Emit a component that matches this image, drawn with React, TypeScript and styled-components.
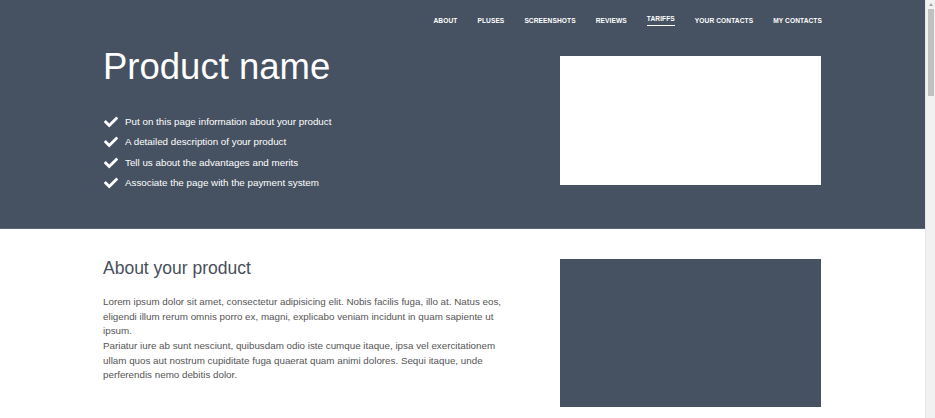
import styled, { createGlobalStyle } from "styled-components";
import { FaCheck } from "react-icons/fa";

const GlobalStyle = createGlobalStyle`
  html, body {
    margin: 0;
    padding: 0;
    background: #ffffff;
  }
  body {
    font-family: "Liberation Sans", Arial, sans-serif;
    padding-right: 10px;
  }
  * {
    box-sizing: border-box;
  }
`;

const NAV_ITEMS = [
  "About",
  "Pluses",
  "Screenshots",
  "Reviews",
  "Tariffs",
  "Your contacts",
  "My contacts",
];

const FEATURES = [
  "Put on this page information about your product",
  "A detailed description of your product",
  "Tell us about the advantages and merits",
  "Associate the page with the payment system",
];

// the page scrollbar as it shows in the shot
const ScrollTrack = styled.div`
  position: fixed;
  top: 0;
  right: 0;
  width: 10px;
  height: 100vh;
  background: #f1f1f1;
  border-left: 1px solid #e6e6e6;
  z-index: 10;
`;

const ScrollArrow = styled.div`
  width: 0;
  height: 0;
  margin: 3px auto 0;
  border-left: 2.5px solid transparent;
  border-right: 2.5px solid transparent;
  border-bottom: 3px solid #a3a3a3;
`;

const ScrollThumb = styled.div`
  margin: 3px 1px 0 2px;
  height: 87px;
  background: #c1c1c1;
`;

const Header = styled.header`
  background: #465261;
  border-bottom: 1px solid #5c6774;
  padding: 10px 0 35px;
`;

const Container = styled.div`
  width: 719px;
  margin: 0 auto;
`;

const Nav = styled.nav`
  display: flex;
  justify-content: flex-end;
  gap: 20px;
  height: 20px;
  align-items: center;
`;

const NavLink = styled.a<{ $active?: boolean }>`
  color: #ffffff;
  font-size: 6.6px;
  font-weight: 700;
  text-transform: uppercase;
  text-decoration: none;
  letter-spacing: 0.1px;
  padding-bottom: ${(p) => (p.$active ? "3px" : "0")};
  border-bottom: ${(p) => (p.$active ? "1.5px solid #ffffff" : "none")};
  cursor: pointer;
`;

const Row = styled.div`
  display: grid;
  grid-template-columns: 1fr 262px;
  column-gap: 40px;
`;

const Hero = styled(Row)`
  margin-top: 16px;
`;

const Title = styled.h1`
  margin: 0;
  color: #ffffff;
  font-size: 36.5px;
  font-weight: 400;
  line-height: 42px;
`;

const FeatureList = styled.ul`
  list-style: none;
  margin: 24px 0 0;
  padding: 0;
`;

const Feature = styled.li`
  display: flex;
  align-items: center;
  gap: 7px;
  color: #ffffff;
  font-size: 9.8px;
  line-height: 20.3px;
  svg {
    width: 14px;
    height: 14px;
    margin-left: 1px;
  }
`;

const Picture = styled.div<{ $tone: "light" | "dark"; $height: number }>`
  height: ${(p) => p.$height}px;
  background: ${(p) => (p.$tone === "light" ? "#ffffff" : "#465261")};
  margin-top: ${(p) => (p.$tone === "light" ? "10px" : "0")};
  margin-right: 1px;
`;

const Section = styled.section`
  padding: 30px 0 40px;
`;

const SectionTitle = styled.h2`
  margin: 0;
  color: #474f5a;
  font-size: 17.5px;
  font-weight: 400;
  line-height: 18px;
`;

const Text = styled.p`
  margin: 18px 0 0;
  color: #555555;
  font-size: 9.8px;
  line-height: 14.6px;
`;

export default function App() {
  return (
    <>
      <GlobalStyle />
      <ScrollTrack>
        <ScrollArrow />
        <ScrollThumb />
      </ScrollTrack>
      <Header>
        <Container>
          <Nav>
            {NAV_ITEMS.map((item) => (
              <NavLink key={item} $active={item === "Tariffs"}>
                {item}
              </NavLink>
            ))}
          </Nav>
          <Hero>
            <div>
              <Title>Product name</Title>
              <FeatureList>
                {FEATURES.map((f) => (
                  <Feature key={f}>
                    <FaCheck />
                    {f}
                  </Feature>
                ))}
              </FeatureList>
            </div>
            <Picture $tone="light" $height={129} />
          </Hero>
        </Container>
      </Header>
      <Section>
        <Container>
          <Row>
            <div>
              <SectionTitle>About your product</SectionTitle>
              <Text>
                Lorem ipsum dolor sit amet, consectetur adipisicing elit. Nobis
                facilis fuga, illo at. Natus eos, eligendi illum rerum omnis
                porro ex, magni, explicabo veniam incidunt in quam sapiente ut
                ipsum.
                <br />
                Pariatur iure ab sunt nesciunt, quibusdam odio iste cumque
                itaque, ipsa vel exercitationem ullam quos aut nostrum
                cupiditate fuga quaerat quam animi dolores. Sequi itaque, unde
                perferendis nemo debitis dolor.
              </Text>
            </div>
            <Picture $tone="dark" $height={148} />
          </Row>
        </Container>
      </Section>
    </>
  );
}
